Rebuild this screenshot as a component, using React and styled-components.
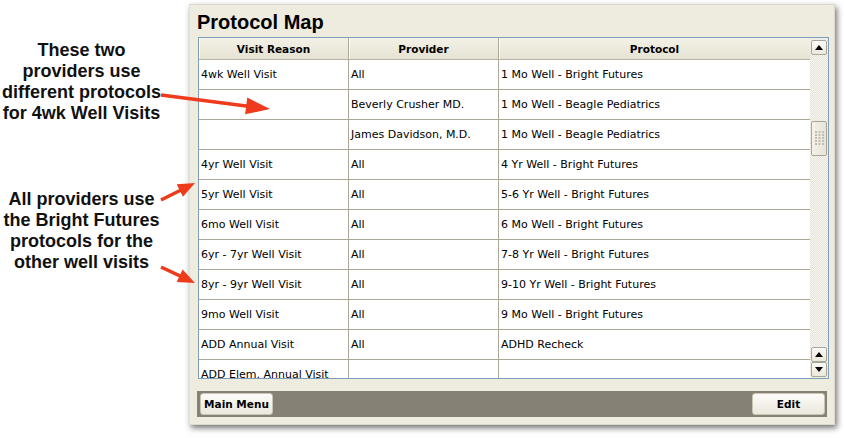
import React from "react";
import styled, { createGlobalStyle } from "styled-components";

const GlobalStyle = createGlobalStyle`
  html, body { margin: 0; padding: 0; background: #ffffff; }
  body { font-family: "DejaVu Sans", Verdana, sans-serif; }
  * { box-sizing: border-box; }
`;

const Page = styled.div`
  position: relative;
  width: 844px;
  height: 438px;
  display: flex;
  align-items: flex-start;
  background: #ffffff;
  overflow: hidden;
`;

const Notes = styled.div`
  width: 163px;
  flex-shrink: 0;
  margin-right: 26px;
  padding-top: 40px;
  display: flex;
  flex-direction: column;
`;

const Note = styled.div`
  margin-top: ${(p) => p.$gap || 0}px;
  font-family: "Liberation Sans", Arial, sans-serif;
  font-weight: bold;
  font-size: 18px;
  line-height: 21px;
  text-align: center;
  color: #111111;
  white-space: nowrap;
`;

const Window = styled.div`
  margin-top: 4px;
  width: 646px;
  height: 421px;
  flex-shrink: 0;
  display: flex;
  flex-direction: column;
  padding: 0 7px 7px 7px;
  background: #eeebdf;
  border: 1px solid #dcd9cc;
  border-left-color: #e4e1d4;
  box-shadow: 2px 3px 6px rgba(0, 0, 0, 0.55);
`;

const Title = styled.div`
  height: 32px;
  padding-top: 2px;
  line-height: 30px;
  font-family: "Liberation Sans", Arial, sans-serif;
  font-weight: bold;
  font-size: 20px;
  color: #000000;
`;

const Frame = styled.div`
  margin-left: 1px;
  width: 631px;
  height: 342px;
  display: flex;
  border: 1px solid #7f9db9;
  background: #ffffff;
`;

const Grid = styled.div`
  flex: 1;
  display: flex;
  flex-direction: column;
  overflow: hidden;
`;

const HeaderRow = styled.div`
  display: grid;
  grid-template-columns: 150px 150px 1fr;
  height: 22px;
  flex-shrink: 0;
  background: linear-gradient(#f3f1e6, #e6e3d4);
  border-bottom: 1px solid #b6b2a2;
`;

const HeadCell = styled.div`
  display: flex;
  align-items: center;
  justify-content: center;
  font-weight: bold;
  font-size: 10.5px;
  color: #000000;
  border-right: ${(p) => (p.$last ? "none" : "1px solid #aca899")};
  box-shadow: inset 1px 0 0 #ffffff;
`;

const Body = styled.div`
  flex: 1;
  overflow: hidden;
`;

const Row = styled.div`
  display: grid;
  grid-template-columns: 150px 150px 1fr;
  height: 30px;
  border-bottom: 1px solid #aca899;
`;

const Cell = styled.div`
  display: flex;
  align-items: center;
  padding-left: 2px;
  font-size: 11px;
  color: #000000;
  white-space: nowrap;
  overflow: hidden;
  border-right: ${(p) => (p.$last ? "none" : "1px solid #aca899")};
`;

const Scrollbar = styled.div`
  width: 18px;
  flex-shrink: 0;
  display: flex;
  flex-direction: column;
  padding: 1px 1px 1px 1px;
  background-color: #f7f6f1;
  background-image: conic-gradient(#e6e4da 25%, transparent 0 50%, #e6e4da 0 75%, transparent 0);
  background-size: 2px 2px;
`;

const ScrollBtn = styled.div`
  height: 15px;
  flex-shrink: 0;
  display: flex;
  align-items: center;
  justify-content: center;
  margin-top: ${(p) => p.$mt || 0}px;
  background: linear-gradient(#fbfaf6, #ebe8dc);
  border: 1px solid #a9a698;
  border-radius: 2px;
`;

const Track = styled.div`
  flex: 1;
`;

const Thumb = styled.div`
  margin-top: 66px;
  height: 35px;
  display: flex;
  align-items: center;
  justify-content: center;
  background: linear-gradient(90deg, #f4f2ea, #e7e4d8);
  border: 1px solid #a9a698;
  border-radius: 2px;
`;

const BottomBar = styled.div`
  margin-top: 12px;
  height: 27px;
  display: flex;
  justify-content: space-between;
  align-items: flex-start;
  padding: 2px 2px 0 3px;
  background: #858174;
`;

const Button = styled.div`
  width: 73px;
  height: 22px;
  display: flex;
  align-items: center;
  justify-content: center;
  font-weight: bold;
  font-size: 10.5px;
  color: #000000;
  background: linear-gradient(#fcfbf8, #ebe8dd);
  border: 1px solid #c9c5b4;
  border-radius: 3px;
`;

const ArrowLayer = styled.svg`
  position: absolute;
  left: 0;
  top: 0;
  pointer-events: none;
`;

const Up = () => (
  <svg width="8" height="5" viewBox="0 0 8 5">
    <polygon points="4,0 8,5 0,5" fill="#000" />
  </svg>
);
const Down = () => (
  <svg width="8" height="5" viewBox="0 0 8 5">
    <polygon points="0,0 8,0 4,5" fill="#000" />
  </svg>
);
const Grip = () => (
  <svg width="9" height="15" viewBox="0 0 9 15">
    {[0, 1, 2, 3, 4].map((r) =>
      [0, 1, 2].map((c) => (
        <rect key={`${r}-${c}`} x={c * 3.5} y={r * 3} width="2" height="2" fill="#c2bfb2" />
      ))
    )}
  </svg>
);

const rows = [
  ["4wk Well Visit", "All", "1 Mo Well - Bright Futures"],
  ["", "Beverly Crusher MD.", "1 Mo Well - Beagle Pediatrics"],
  ["", "James Davidson, M.D.", "1 Mo Well - Beagle Pediatrics"],
  ["4yr Well Visit", "All", "4 Yr Well - Bright Futures"],
  ["5yr Well Visit", "All", "5-6 Yr Well - Bright Futures"],
  ["6mo Well Visit", "All", "6 Mo Well - Bright Futures"],
  ["6yr - 7yr Well Visit", "All", "7-8 Yr Well - Bright Futures"],
  ["8yr - 9yr Well Visit", "All", "9-10 Yr Well - Bright Futures"],
  ["9mo Well Visit", "All", "9 Mo Well - Bright Futures"],
  ["ADD Annual Visit", "All", "ADHD Recheck"],
  ["ADD Elem. Annual Visit", "", ""],
];

function Arrow({ x1, y1, x2, y2, len, w }) {
  const dx = x2 - x1;
  const dy = y2 - y1;
  const d = Math.hypot(dx, dy);
  const ux = dx / d;
  const uy = dy / d;
  const bx = x2 - ux * len;
  const by = y2 - uy * len;
  const px = (-uy * w) / 2;
  const py = (ux * w) / 2;
  return (
    <g>
      <line x1={x1} y1={y1} x2={bx + ux * 2} y2={by + uy * 2} stroke="#ee3b1c" strokeWidth="3.5" />
      <polygon
        points={`${x2},${y2} ${bx + px},${by + py} ${bx - px},${by - py}`}
        fill="#ee3b1c"
      />
    </g>
  );
}

export default function App() {
  return (
    <>
      <GlobalStyle />
      <Page>
        <Notes>
          <Note>
            These two
            <br />
            providers use
            <br />
            different protocols
            <br />
            for 4wk Well Visits
          </Note>
          <Note $gap={65}>
            All providers use
            <br />
            the Bright Futures
            <br />
            protocols for the
            <br />
            other well visits
          </Note>
        </Notes>
        <Window>
          <Title>Protocol Map</Title>
          <Frame>
            <Grid>
              <HeaderRow>
                <HeadCell>Visit Reason</HeadCell>
                <HeadCell>Provider</HeadCell>
                <HeadCell $last>Protocol</HeadCell>
              </HeaderRow>
              <Body>
                {rows.map((r, i) => (
                  <Row key={i}>
                    <Cell>{r[0]}</Cell>
                    <Cell>{r[1]}</Cell>
                    <Cell $last>{r[2]}</Cell>
                  </Row>
                ))}
              </Body>
            </Grid>
            <Scrollbar>
              <ScrollBtn $mt={1}>
                <Up />
              </ScrollBtn>
              <Track>
                <Thumb>
                  <Grip />
                </Thumb>
              </Track>
              <ScrollBtn>
                <Up />
              </ScrollBtn>
              <ScrollBtn>
                <Down />
              </ScrollBtn>
            </Scrollbar>
          </Frame>
          <BottomBar>
            <Button>Main Menu</Button>
            <Button>Edit</Button>
          </BottomBar>
        </Window>
        <ArrowLayer width="844" height="438" viewBox="0 0 844 438">
          <Arrow x1={161} y1={95} x2={270} y2={109} len={24} w={17} />
          <Arrow x1={161} y1={200} x2={195} y2={183} len={17} w={14} />
          <Arrow x1={161} y1={267} x2={195} y2={283} len={17} w={14} />
        </ArrowLayer>
      </Page>
    </>
  );
}
